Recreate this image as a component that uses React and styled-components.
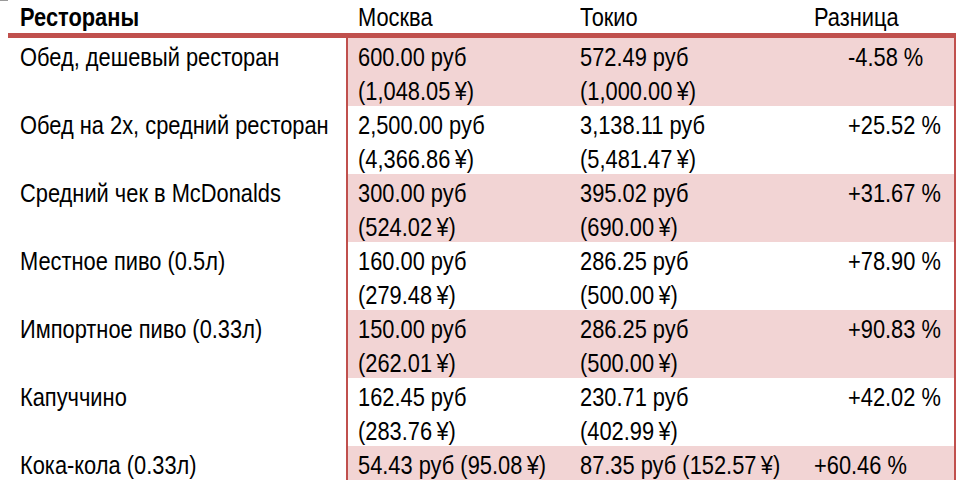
import React from "react";
import styled, { createGlobalStyle } from "styled-components";

const GlobalStyle = createGlobalStyle`
  html, body {
    margin: 0;
    padding: 0;
    background: #ffffff;
  }
  body {
    font-family: "Liberation Sans", Arial, sans-serif;
    color: #000000;
    overflow: hidden;
  }
`;

const rows = [
  { name: "Обед, дешевый ресторан", msk: ["600.00 руб", "(1,048.05\u2009¥)"], tky: ["572.49 руб", "(1,000.00\u2009¥)"], diff: "-4.58 %" },
  { name: "Обед на 2х, средний ресторан", msk: ["2,500.00 руб", "(4,366.86\u2009¥)"], tky: ["3,138.11 руб", "(5,481.47\u2009¥)"], diff: "+25.52 %" },
  { name: "Средний чек в McDonalds", msk: ["300.00 руб", "(524.02\u2009¥)"], tky: ["395.02 руб", "(690.00\u2009¥)"], diff: "+31.67 %" },
  { name: "Местное пиво (0.5л)", msk: ["160.00 руб", "(279.48\u2009¥)"], tky: ["286.25 руб", "(500.00\u2009¥)"], diff: "+78.90 %" },
  { name: "Импортное пиво (0.33л)", msk: ["150.00 руб", "(262.01\u2009¥)"], tky: ["286.25 руб", "(500.00\u2009¥)"], diff: "+90.83 %" },
  { name: "Капуччино", msk: ["162.45 руб", "(283.76\u2009¥)"], tky: ["230.71 руб", "(402.99\u2009¥)"], diff: "+42.02 %" },
  { name: "Кока-кола (0.33л)", msk: ["54.43 руб (95.08\u2009¥)"], tky: ["87.35 руб (152.57\u2009¥)"], diff: "+60.46 %", flat: true },
];

const Page = styled.div`
  position: relative;
  padding-left: 8px;
  width: 957px;
  box-sizing: border-box;
`;

const CornerMark = styled.div`
  position: absolute;
  left: 0;
  top: 0;
  width: 8px;
  height: 1px;
  background: #9a9a9a;
`;

const Table = styled.div`
  display: grid;
  grid-template-columns: 338px 222px 234px 154px;
  width: 948px;
`;

const HeadCell = styled.div`
  box-sizing: border-box;
  height: 38px;
  padding: 1px 12px 0;
  font-size: 26px;
  line-height: 32px;
  font-weight: ${(p) => (p.bold ? 700 : 400)};
  border-bottom: 5px solid #c0504d;
  white-space: nowrap;
`;

const Cell = styled.div`
  box-sizing: border-box;
  padding-top: 2px;
  padding-right: 12px;
  padding-left: ${(p) => (p.divider ? 10 : p.indent || 12)}px;
  font-size: 26px;
  line-height: 34px;
  height: ${(p) => (p.flat ? 34 : 68)}px;
  white-space: nowrap;
  background: ${(p) => (p.shade ? "#f2d4d4" : "#ffffff")};
  border-left: ${(p) => (p.divider ? "2px solid #c0504d" : "none")};
  border-right: ${(p) => (p.edge ? "2px solid #c0504d" : "none")};
`;

const NameCell = styled(Cell)`
  background: #ffffff;
`;

const Line = styled.span`
  display: block;
  width: max-content;
  transform: scaleX(0.84);
  transform-origin: left center;
`;

export default function App() {
  return (
    <Page>
      <GlobalStyle />
      <CornerMark />
      <Table>
        <HeadCell bold><Line>Рестораны</Line></HeadCell>
        <HeadCell><Line>Москва</Line></HeadCell>
        <HeadCell><Line>Токио</Line></HeadCell>
        <HeadCell><Line>Разница</Line></HeadCell>
        {rows.map((r, i) => {
          const shade = i % 2 === 0;
          return (
            <React.Fragment key={r.name}>
              <NameCell flat={r.flat}>
                <Line>{r.name}</Line>
              </NameCell>
              <Cell divider shade={shade} flat={r.flat}>
                {r.msk.map((l) => (
                  <Line key={l}>{l}</Line>
                ))}
              </Cell>
              <Cell shade={shade} flat={r.flat}>
                {r.tky.map((l) => (
                  <Line key={l}>{l}</Line>
                ))}
              </Cell>
              <Cell shade={shade} flat={r.flat} edge indent={r.flat ? 12 : 46}>
                <Line>{r.diff}</Line>
              </Cell>
            </React.Fragment>
          );
        })}
      </Table>
    </Page>
  );
}
